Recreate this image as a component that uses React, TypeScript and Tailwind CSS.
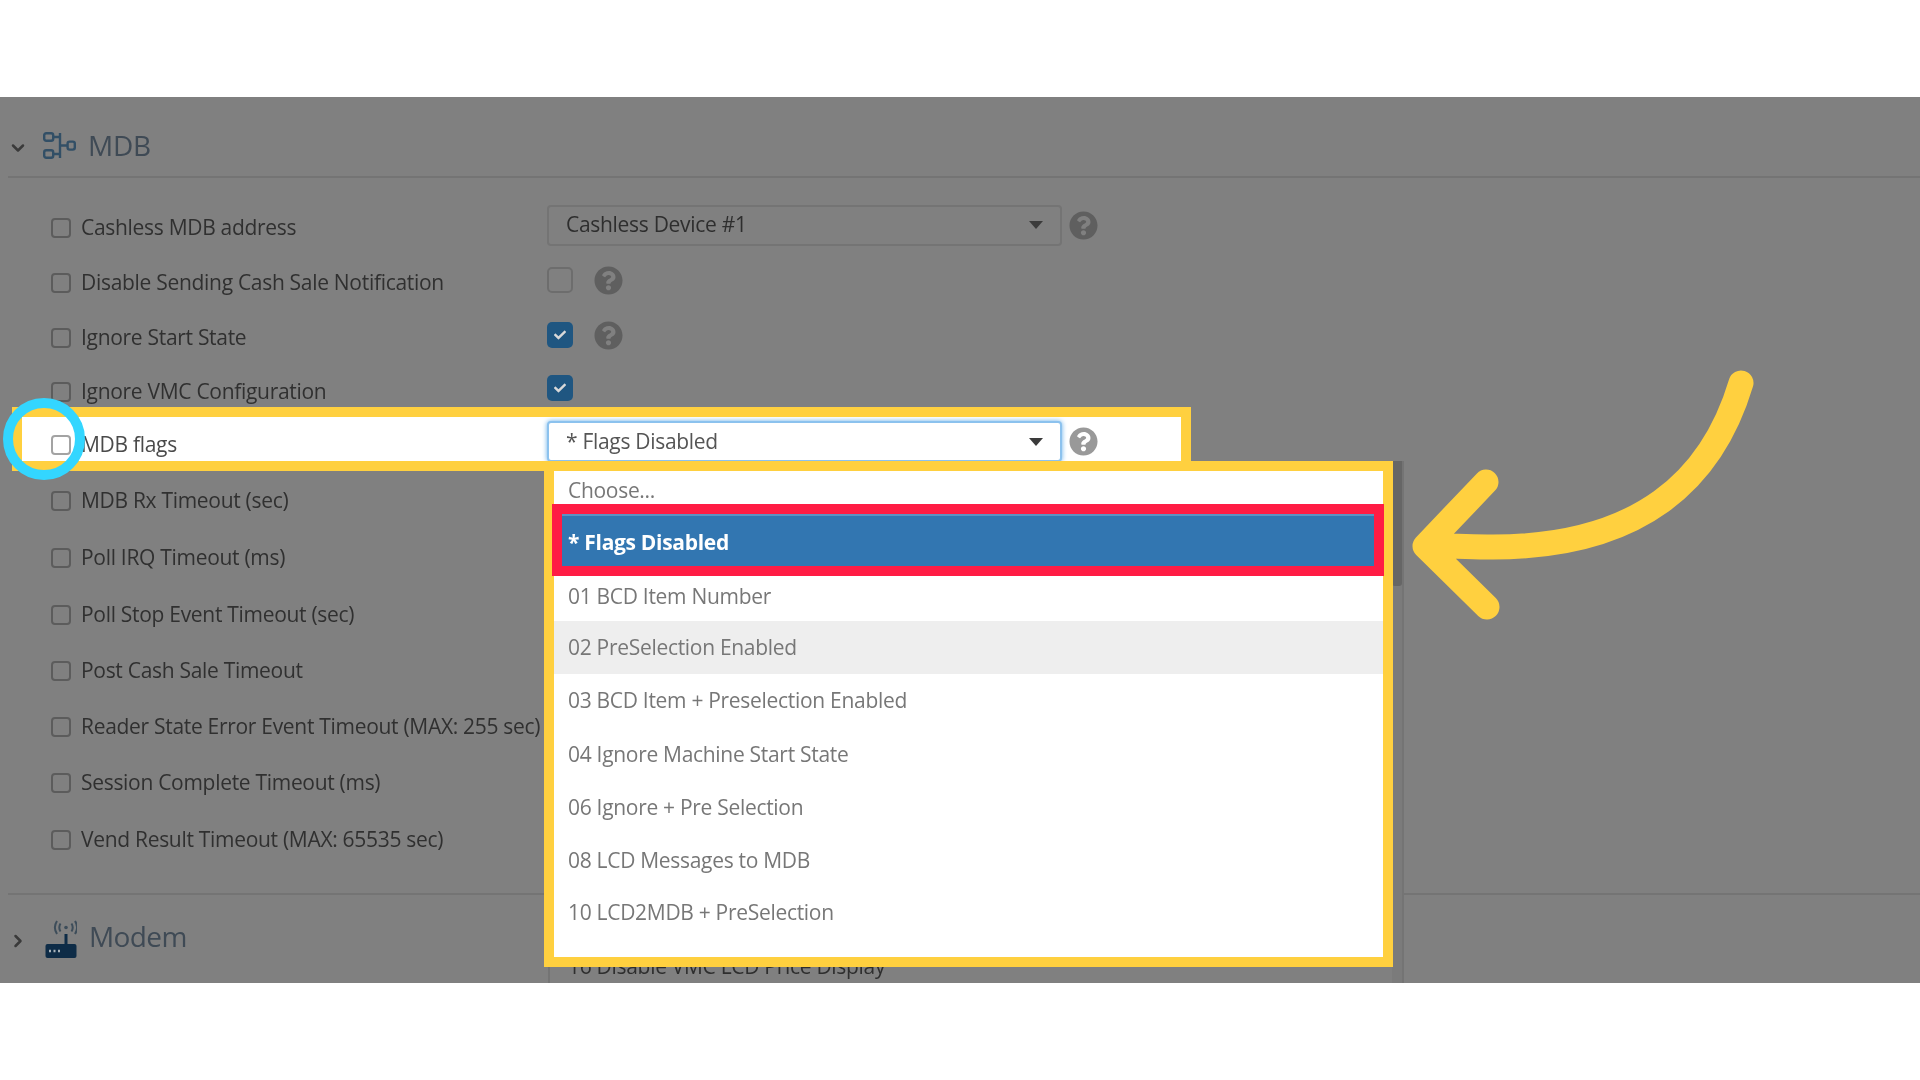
import { ChevronDown, ChevronRight } from "lucide-react";
import { FaCheck, FaQuestionCircle } from "react-icons/fa";

const font = "font-['Open_Sans',sans-serif]";

function Caret() {
  return (
    <svg width="16" height="10" viewBox="0 0 16 10" className="shrink-0">
      <path d="M1 1h14L8 9z" fill="#3b3b3b" />
    </svg>
  );
}

function Help({ light }: { light?: boolean }) {
  return <FaQuestionCircle size={29} className={light ? "shrink-0 text-[#999999]" : "shrink-0 text-[#5f5f5f]"} />;
}

function Box({ light }: { light?: boolean }) {
  return (
    <span
      className={
        light
          ? "block h-[20px] w-[20px] shrink-0 rounded-[4px] border-2 border-[#a3a3a3]"
          : "block h-[20px] w-[20px] shrink-0 rounded-[4px] border-2 border-[#5c5c5c]"
      }
    />
  );
}

function Tick({ checked }: { checked?: boolean }) {
  if (!checked) return <span className="block h-[26px] w-[26px] rounded-[5px] border-2 border-[#6d6d6d]" />;
  return (
    <span className="flex h-[26px] w-[26px] items-center justify-center rounded-[5px] bg-[#1f5681]">
      <FaCheck size={12} className="text-[#d9d9d9]" />
    </span>
  );
}

function Select({ label, active }: { label: string; active?: boolean }) {
  return (
    <div
      className={
        active
          ? "flex h-[41px] w-[515px] items-center justify-between rounded-[4px] border-2 border-[#8cc2ee] bg-white pl-[17px] pr-[16px] text-[#555555] shadow-[0_0_5px_#66afe9]"
          : "flex h-[41px] w-[515px] items-center justify-between rounded-[4px] border-2 border-[#747474] pl-[17px] pr-[16px] text-[#2e2e2e]"
      }
    >
      <span className="blur-[0.4px]">{label}</span>
      <Caret />
    </div>
  );
}

function Label({ children }: { children: string }) {
  return <span className="ml-[10px] w-[466px] shrink-0 whitespace-nowrap text-[#303030] blur-[0.4px]">{children}</span>;
}

function MdbIcon() {
  return (
    <svg width="33" height="27" viewBox="0 0 33 27" fill="none" stroke="#324f66" strokeWidth="2.4" className="shrink-0">
      <rect x="1.2" y="1.2" width="9" height="7.6" rx="2" />
      <rect x="1.2" y="18.2" width="9" height="7.6" rx="2" />
      <rect x="24.6" y="9.6" width="7.2" height="8" rx="2" />
      <path d="M17 1v25M10 5h7M10 22h7M17 13.5h8" />
    </svg>
  );
}

function ModemIcon() {
  return (
    <svg width="32" height="38" viewBox="0 0 32 38" fill="none" className="shrink-0">
      <rect x="0.5" y="24" width="31" height="14" rx="2" fill="#0e2c47" />
      <path d="M21 14v11" stroke="#0e2c47" strokeWidth="3" />
      <circle cx="21" cy="7.5" r="1.8" fill="#3d4d5a" />
      <path d="M15.5 3.5c-1.6 2.6-1.6 5.4 0 8M26.5 3.5c1.6 2.6 1.6 5.4 0 8M12 1c-2.6 4-2.6 9 0 13M30 1c2.6 4 2.6 9 0 13" stroke="#3d4d5a" strokeWidth="2" />
      <path d="M4 31h2M8.5 31h2M13 31h2" stroke="#a8b2ba" strokeWidth="2.4" />
    </svg>
  );
}

function Row({ label, className, children }: { label: string; className: string; children?: React.ReactNode }) {
  return (
    <div className={`flex h-[40px] items-center pl-[51px] ${className}`}>
      <Box />
      <Label>{label}</Label>
      {children}
    </div>
  );
}

const timeoutRows = [
  { label: "MDB Rx Timeout (sec)", className: "mt-[16px]" },
  { label: "Poll IRQ Timeout (ms)", className: "mt-[17px]" },
  { label: "Poll Stop Event Timeout (sec)", className: "mt-[17px]" },
  { label: "Post Cash Sale Timeout", className: "mt-[16px]" },
  { label: "Reader State Error Event Timeout (MAX: 255 sec)", className: "mt-[16px]" },
  { label: "Session Complete Timeout (ms)", className: "mt-[16px]" },
  { label: "Vend Result Timeout (MAX: 65535 sec)", className: "mt-[17px]" },
];

const options = [
  { label: "01 BCD Item Number", className: "h-[45px] pb-[4px]" },
  { label: "02 PreSelection Enabled", className: "h-[53px] bg-[#eeeeee]" },
  { label: "03 BCD Item + Preselection Enabled", className: "h-[54px]" },
  { label: "04 Ignore Machine Start State", className: "h-[53px]" },
  { label: "06 Ignore + Pre Selection", className: "h-[53px]" },
  { label: "08 LCD Messages to MDB", className: "h-[53px]" },
  { label: "10 LCD2MDB + PreSelection", className: "h-[53px] pb-[2px]" },
];

export default function App() {
  return (
    <div className={`flex h-[1080px] w-[1920px] flex-col overflow-hidden bg-white text-[21px] tracking-[-0.3px] ${font}`}>
      <div className="h-[97px] shrink-0" />
      <div className="relative h-[886px] shrink-0 overflow-hidden bg-[#808080]">
        {/* MDB section header */}
        <div className="ml-[8px] flex h-[81px] items-center border-b-2 border-[#747474] pt-[17px]">
          <ChevronDown size={20} strokeWidth={3} className="mt-[6px] text-[#3a3a3a]" />
          <span className="ml-[15px]">
            <MdbIcon />
          </span>
          <span className="ml-[12px] text-[28px] text-[#3f4a55] blur-[0.4px]">MDB</span>
        </div>

        <div className="pt-[30px]">
          <Row label="Cashless MDB address" className="">
            <span className="-mt-[6px] flex items-center gap-[7px]">
              <Select label="Cashless Device #1" />
              <Help />
            </span>
          </Row>
          <Row label="Disable Sending Cash Sale Notification" className="mt-[15px]">
            <span className="-mt-[6px] flex items-center gap-[21px]">
              <Tick />
              <Help />
            </span>
          </Row>
          <Row label="Ignore Start State" className="mt-[15px]">
            <span className="-mt-[6px] flex items-center gap-[21px]">
              <Tick checked />
              <Help />
            </span>
          </Row>
          <Row label="Ignore VMC Configuration" className="mt-[14px]">
            <span className="-mt-[8px]">
              <Tick checked />
            </span>
          </Row>

          {/* highlighted row */}
          <div className="relative mt-[13px] flex h-[40px] items-center pl-[51px]">
            <div className="absolute left-[12px] top-[-18px] h-[64px] w-[1179px] bg-white" />
            <div className="relative flex items-center">
              <Box light />
              <span className="ml-[10px] w-[466px] shrink-0 text-[#4a4a4a] blur-[0.4px]">MDB flags</span>
              <span className="-mt-[7px] flex items-center gap-[7px]">
                <Select label="* Flags Disabled" active />
                <Help light />
              </span>
            </div>
            <div className="absolute left-[12px] top-[-18px] h-[64px] w-[1179px] border-[10px] border-[#ffd03f]" />
          </div>

          {timeoutRows.map((r) => (
            <Row key={r.label} label={r.label} className={r.className} />
          ))}
        </div>

        {/* Modem section */}
        <div className="absolute bottom-0 left-[8px] right-0 flex h-[90px] items-center border-t-2 border-[#747474]">
          <ChevronRight size={20} strokeWidth={3} className="mt-[4px] text-[#3a3a3a]" />
          <span className="ml-[17px]">
            <ModemIcon />
          </span>
          <span className="mb-[6px] ml-[12px] text-[28px] tracking-[-0.6px] text-[#3f4a55] blur-[0.4px]">Modem</span>
        </div>

        {/* open select list behind the annotation */}
        <div className="absolute left-[548px] top-[364px] flex h-[522px] w-[856px] items-end overflow-hidden border-x-2 border-[#747474] bg-[#808080] pl-[18px] text-[#2e2e2e]">
          <span className="mb-[1px] blur-[0.4px]">16 Disable VMC LCD Price Display</span>
          <div className="absolute right-0 top-0 h-full w-[10px] bg-[#7b7b7b]">
            <div className="h-[125px] w-full rounded-b-[3px] bg-[#666666]" />
          </div>
        </div>

        {/* annotated dropdown */}
        <div className="absolute left-[544px] top-[364px] flex h-[506px] w-[849px] flex-col border-[10px] border-[#ffd03f] bg-white text-[#777777]">
          <div className="flex h-[33px] shrink-0 items-end pl-[14px]">
            <span className="-mb-[2px] blur-[0.4px]">Choose...</span>
          </div>
          <div className="relative -ml-[2px] -mr-[1px] h-[72px] shrink-0 border-[10px] border-[#ff1c44]">
            <div className="flex h-full items-center border-t-2 border-[#5b93c3] bg-[#3276b1] pl-[6px] font-bold text-white">
              <span className="mt-[3px] blur-[0.4px]">* Flags Disabled</span>
            </div>
          </div>
          {options.map((o) => (
            <div key={o.label} className={`flex shrink-0 items-center pl-[14px] ${o.className}`}>
              <span className="blur-[0.4px]">{o.label}</span>
            </div>
          ))}
        </div>

        {/* cyan circle */}
        <div className="absolute left-[3px] top-[301px] h-[82px] w-[82px] rounded-full border-[10px] border-[#33d6ff]" />

        {/* yellow arrow */}
        <svg width="400" height="300" viewBox="1400 350 400 300" fill="none" className="absolute left-[1400px] top-[253px]">
          <path
            d="M1741 383C1712 480 1640 547 1493 547C1470 547 1450 546 1430 545M1486 482L1425 546L1487 607"
            stroke="#ffd03f"
            strokeWidth="25"
            strokeLinecap="round"
            strokeLinejoin="round"
          />
        </svg>
      </div>
      <div className="flex-1" />
    </div>
  );
}
